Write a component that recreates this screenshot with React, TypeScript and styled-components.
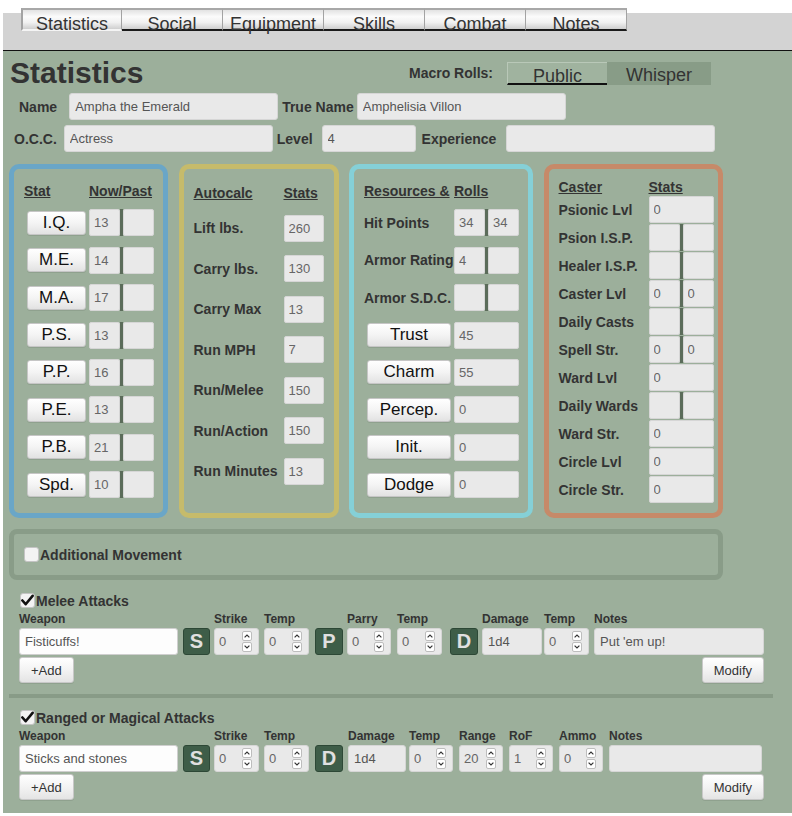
import React from "react";
import styled, { createGlobalStyle } from "styled-components";

const GlobalStyle = createGlobalStyle`
  html, body { margin: 0; padding: 0; background: #fff; }
  body { font-family: "Liberation Sans", Arial, sans-serif; color: #333; }
  * { box-sizing: border-box; }
  input { font-family: "Liberation Sans", Arial, sans-serif; }
`;

const Page = styled.div`
  margin-left: 3px;
  width: 789px;
  padding-top: 13px;
`;

const TopBar = styled.div`
  display: flex;
  align-items: flex-start;
  height: 38px;
  background: #d3d3d3;
  border-bottom: 1px solid #111;
  padding-left: 18px;
`;

const TabRow = styled.div`
  display: flex;
  margin-top: -5px;
`;

const Tab = styled.div<{ $active?: boolean }>`
  width: 101px;
  height: 23px;
  border-top: 2px solid #a8a8a8;
  border-right: 1px solid #a3a3a3;
  border-left: ${(p) => (p.$active ? "2px solid #a3a3a3" : "0")};
  border-bottom: 2px solid ${(p) => (p.$active ? "#f4f4f4" : "#1a1a1a")};
  background: linear-gradient(to bottom, #e2e2e2 0%, #fbfbfb 35%, #f1f1f1 65%, #cfcfcf 100%);
  font-size: 18px;
  line-height: 18px;
  padding-top: 5px;
  text-align: center;
  color: #333;
  overflow: visible;
`;

const Main = styled.div`
  background: #9caf9b;
  display: flex;
  flex-direction: column;
  align-items: flex-start;
  padding: 5px 0 13px 6px;
`;

const HeaderRow = styled.div`
  display: flex;
  align-items: center;
  height: 34px;
`;

const Heading = styled.h1`
  margin: 0 0 0 1px;
  width: 399px;
  font-size: 30px;
  font-weight: bold;
  color: #333;
  line-height: 34px;
`;

const MacroLabel = styled.span`
  font-size: 14px;
  font-weight: bold;
  margin-right: 14px;
`;

const Toggle = styled.div`
  display: flex;
  height: 23px;
  background: #889c87;
`;

const Seg = styled.div<{ $on?: boolean; $w: number }>`
  width: ${(p) => p.$w}px;
  height: 23px;
  font-size: 18px;
  line-height: 18px;
  padding-top: 4px;
  text-align: center;
  color: #333;
  background: ${(p) => (p.$on ? "#a0b39f" : "#889c87")};
  border-top: ${(p) => (p.$on ? "1px solid #b9c8b8" : "0")};
  border-left: ${(p) => (p.$on ? "1px solid #b9c8b8" : "0")};
  border-bottom: ${(p) => (p.$on ? "2px solid #111" : "0")};
`;

const FormRow = styled.div<{ $mt: number }>`
  display: flex;
  align-items: center;
  height: 27px;
  margin-top: ${(p) => p.$mt}px;
`;

const FormLabel = styled.span<{ $ml: number; $mr: number }>`
  font-size: 14px;
  font-weight: bold;
  white-space: nowrap;
  margin-left: ${(p) => p.$ml}px;
  margin-right: ${(p) => p.$mr}px;
`;

const TextField = styled.input<{ $w: number; $white?: boolean }>`
  width: ${(p) => p.$w}px;
  height: 27px;
  flex: none;
  background: ${(p) => (p.$white ? "#fdfdfd" : "#e9e9e9")};
  border: 1px solid ${(p) => (p.$white ? "#cfcfcf" : "#d6d6d6")};
  border-radius: 3px;
  font-size: 13px;
  color: #555;
  padding: 0 5px;
  outline: none;
`;

const BoxesRow = styled.div`
  display: flex;
  gap: 10.5px;
  height: 354px;
  margin-top: 12px;
`;

const Box = styled.div<{ $c: string; $w: number; $pt: number; $gap: number }>`
  width: ${(p) => p.$w}px;
  border: 5px solid ${(p) => p.$c};
  border-radius: 10px;
  padding: ${(p) => p.$pt}px 0 0 10px;
  display: flex;
  flex-direction: column;
  gap: ${(p) => p.$gap}px;
`;

const BoxGrid = styled.div<{ $cols: string }>`
  display: grid;
  grid-template-columns: ${(p) => p.$cols};
  align-items: center;
  min-height: 16px;
`;

const BoxHead = styled.span`
  font-size: 14px;
  font-weight: bold;
  text-decoration: underline;
  line-height: 16px;
  white-space: nowrap;
`;

const BoxRow = styled(BoxGrid)`
  height: 27px;
`;

const RowLabel = styled.span`
  font-size: 14px;
  font-weight: bold;
  white-space: nowrap;
`;

const StatButton = styled.button<{ $w: number }>`
  width: ${(p) => p.$w}px;
  height: 24px;
  margin-left: 3px;
  padding: 0;
  font-family: "Liberation Sans", Arial, sans-serif;
  font-size: 17px;
  color: #111;
  background: linear-gradient(to bottom, #ffffff 0%, #f4f4f4 50%, #e2e2e2 100%);
  border: 1px solid #c6c6c6;
  border-radius: 3px;
  box-shadow: 0 1px 0 rgba(0, 0, 0, 0.08);
`;

const Cell = styled.input<{ $w: number }>`
  width: ${(p) => p.$w}px;
  height: 27px;
  background: #e9e9e9;
  border: 1px solid #d6d6d6;
  border-radius: 2px;
  font-size: 13px;
  color: #666;
  padding: 0 4px;
  outline: none;
`;

const Split = styled.div`
  display: flex;
  height: 27px;
`;

const SplitBar = styled.div`
  width: 3px;
  height: 27px;
  background: #5b6c5a;
`;

const MoveBox = styled.div`
  width: 714px;
  height: 51px;
  margin-top: 11px;
  border: 5px solid #899c88;
  border-radius: 8px;
  display: flex;
  align-items: center;
  padding-left: 10px;
`;

const Check = styled.span`
  width: 15px;
  height: 15px;
  flex: none;
  background: #f3f3f3;
  border: 1px solid #c4c4c4;
  border-radius: 3px;
  display: flex;
  align-items: center;
  justify-content: center;
`;

const CheckLabel = styled.span`
  font-size: 14px;
  font-weight: bold;
  margin-left: 1px;
`;

const Section = styled.div<{ $mt: number }>`
  width: 755px;
  padding-left: 10px;
  margin-top: ${(p) => p.$mt}px;
`;

const SectionTitle = styled.div`
  display: flex;
  align-items: center;
  height: 17px;
  padding-left: 1px;
`;

const AttackRow = styled.div`
  display: flex;
  align-items: flex-end;
  margin-top: 3px;
`;

const Field = styled.div<{ $w: number; $ml: number }>`
  display: flex;
  flex-direction: column;
  width: ${(p) => p.$w}px;
  margin-left: ${(p) => p.$ml}px;
`;

const FieldLabel = styled.span`
  font-size: 12px;
  font-weight: bold;
  line-height: 14px;
  height: 14px;
  margin-bottom: 2px;
  white-space: nowrap;
`;

const RollButton = styled.button`
  width: 100%;
  height: 27px;
  padding: 0;
  background: #3e5d48;
  border: 1px solid #2d4836;
  border-radius: 3px;
  color: #e0e0e0;
  font-family: "Liberation Sans", Arial, sans-serif;
  font-weight: bold;
  font-size: 20px;
  line-height: 25px;
`;

const NumBox = styled.div`
  width: 100%;
  height: 27px;
  display: flex;
  align-items: center;
  background: #e9e9e9;
  border: 1px solid #d6d6d6;
  border-radius: 3px;
  padding-left: 4px;
`;

const NumText = styled.input`
  width: 20px;
  border: 0;
  background: transparent;
  font-size: 13px;
  color: #666;
  padding: 0;
  outline: none;
`;

const Spinner = styled.div`
  display: flex;
  flex-direction: column;
  gap: 1px;
  margin-left: auto;
  margin-right: 6px;
`;

const SpinBtn = styled.span`
  width: 10px;
  height: 10px;
  background: #fff;
  border: 1px solid #bdbdbd;
  border-radius: 2px;
  display: flex;
  align-items: center;
  justify-content: center;
`;

const ButtonRow = styled.div`
  display: flex;
  justify-content: space-between;
  width: 745px;
  margin-top: 2px;
`;

const SmallButton = styled.button`
  height: 26px;
  padding: 0 11px;
  font-family: "Liberation Sans", Arial, sans-serif;
  font-size: 13px;
  color: #333;
  background: linear-gradient(to bottom, #ffffff 0%, #f3f3f3 50%, #e4e4e4 100%);
  border: 1px solid #c8c8c8;
  border-radius: 3px;
  box-shadow: 0 1px 0 rgba(0, 0, 0, 0.08);
`;

const Divider = styled.div`
  width: 764px;
  height: 4px;
  margin-top: 11px;
  background: #889b87;
`;

const CheckMark = () => (
  <svg width="14" height="13" viewBox="0 0 14 13">
    <path d="M1.5 6.5 L5 10.5 L12.5 1.5" fill="none" stroke="#111" strokeWidth="2.8" strokeLinecap="round" strokeLinejoin="round" />
  </svg>
);

const Chevron = ({ up }: { up?: boolean }) => (
  <svg width="6" height="4" viewBox="0 0 6 4">
    <polyline
      points={up ? "0.6,3.4 3,1 5.4,3.4" : "0.6,0.6 3,3 5.4,0.6"}
      fill="none"
      stroke="#333"
      strokeWidth="1.2"
    />
  </svg>
);

const NumInput = ({ v }: { v: string }) => (
  <NumBox>
    <NumText defaultValue={v} />
    <Spinner>
      <SpinBtn>
        <Chevron up />
      </SpinBtn>
      <SpinBtn>
        <Chevron />
      </SpinBtn>
    </Spinner>
  </NumBox>
);

const SplitCells = ({ a, b }: { a: string; b: string }) => (
  <Split>
    <Cell $w={31} defaultValue={a} />
    <SplitBar />
    <Cell $w={31} defaultValue={b} />
  </Split>
);

type AF =
  | { k: "text"; label: string; w: number; ml: number; v: string; white?: boolean }
  | { k: "btn"; t: string; w: number; ml: number }
  | { k: "num"; label: string; w: number; ml: number; v: string };

const melee: AF[] = [
  { k: "text", label: "Weapon", w: 159, ml: 0, v: "Fisticuffs!", white: true },
  { k: "btn", t: "S", w: 27, ml: 5 },
  { k: "num", label: "Strike", w: 45, ml: 4, v: "0" },
  { k: "num", label: "Temp", w: 45, ml: 5, v: "0" },
  { k: "btn", t: "P", w: 28, ml: 6 },
  { k: "num", label: "Parry", w: 44, ml: 4, v: "0" },
  { k: "num", label: "Temp", w: 45, ml: 6, v: "0" },
  { k: "btn", t: "D", w: 28, ml: 8 },
  { k: "text", label: "Damage", w: 60, ml: 4, v: "1d4" },
  { k: "num", label: "Temp", w: 45, ml: 2, v: "0" },
  { k: "text", label: "Notes", w: 170, ml: 5, v: "Put 'em up!" },
];

const ranged: AF[] = [
  { k: "text", label: "Weapon", w: 159, ml: 0, v: "Sticks and stones", white: true },
  { k: "btn", t: "S", w: 27, ml: 5 },
  { k: "num", label: "Strike", w: 45, ml: 4, v: "0" },
  { k: "num", label: "Temp", w: 45, ml: 5, v: "0" },
  { k: "btn", t: "D", w: 28, ml: 6 },
  { k: "text", label: "Damage", w: 58, ml: 5, v: "1d4" },
  { k: "num", label: "Temp", w: 44, ml: 3, v: "0" },
  { k: "num", label: "Range", w: 44, ml: 6, v: "20" },
  { k: "num", label: "RoF", w: 44, ml: 6, v: "1" },
  { k: "num", label: "Ammo", w: 44, ml: 6, v: "0" },
  { k: "text", label: "Notes", w: 153, ml: 6, v: "" },
];

const AttackSection = ({ title, fields, mt }: { title: string; fields: AF[]; mt: number }) => (
  <Section $mt={mt}>
    <SectionTitle>
      <Check>
        <CheckMark />
      </Check>
      <CheckLabel>{title}</CheckLabel>
    </SectionTitle>
    <AttackRow>
      {fields.map((f, i) => (
        <Field key={i} $w={f.w} $ml={f.ml}>
          {f.k === "btn" ? (
            <RollButton>{f.t}</RollButton>
          ) : (
            <>
              <FieldLabel>{f.label}</FieldLabel>
              {f.k === "num" ? (
                <NumInput v={f.v} />
              ) : (
                <TextField $w={f.w} $white={f.white} defaultValue={f.v} />
              )}
            </>
          )}
        </Field>
      ))}
    </AttackRow>
    <ButtonRow>
      <SmallButton>+Add</SmallButton>
      <SmallButton>Modify</SmallButton>
    </ButtonRow>
  </Section>
);

const stats = [
  ["I.Q.", "13"],
  ["M.E.", "14"],
  ["M.A.", "17"],
  ["P.S.", "13"],
  ["P.P.", "16"],
  ["P.E.", "13"],
  ["P.B.", "21"],
  ["Spd.", "10"],
];

const autocalc = [
  ["Lift lbs.", "260"],
  ["Carry lbs.", "130"],
  ["Carry Max", "13"],
  ["Run MPH", "7"],
  ["Run/Melee", "150"],
  ["Run/Action", "150"],
  ["Run Minutes", "13"],
];

const resSplit = [
  ["Hit Points", "34", "34"],
  ["Armor Rating", "4", ""],
  ["Armor S.D.C.", "", ""],
];

const rolls = [
  ["Trust", "45"],
  ["Charm", "55"],
  ["Percep.", "0"],
  ["Init.", "0"],
  ["Dodge", "0"],
];

const caster: { l: string; v: string[] }[] = [
  { l: "Psionic Lvl", v: ["0"] },
  { l: "Psion I.S.P.", v: ["", ""] },
  { l: "Healer I.S.P.", v: ["", ""] },
  { l: "Caster Lvl", v: ["0", "0"] },
  { l: "Daily Casts", v: ["", ""] },
  { l: "Spell Str.", v: ["0", "0"] },
  { l: "Ward Lvl", v: ["0"] },
  { l: "Daily Wards", v: ["", ""] },
  { l: "Ward Str.", v: ["0"] },
  { l: "Circle Lvl", v: ["0"] },
  { l: "Circle Str.", v: ["0"] },
];

const tabs = ["Statistics", "Social", "Equipment", "Skills", "Combat", "Notes"];

export default function App() {
  return (
    <Page>
      <GlobalStyle />
      <TopBar>
        <TabRow>
          {tabs.map((t, i) => (
            <Tab key={t} $active={i === 0}>
              {t}
            </Tab>
          ))}
        </TabRow>
      </TopBar>
      <Main>
        <HeaderRow>
          <Heading>Statistics</Heading>
          <MacroLabel>Macro Rolls:</MacroLabel>
          <Toggle>
            <Seg $on $w={100}>Public</Seg>
            <Seg $w={104}>Whisper</Seg>
          </Toggle>
        </HeaderRow>
        <FormRow $mt={3}>
          <FormLabel $ml={10} $mr={12}>Name</FormLabel>
          <TextField $w={209} defaultValue="Ampha the Emerald" />
          <FormLabel $ml={4} $mr={3}>True Name</FormLabel>
          <TextField $w={209} defaultValue="Amphelisia Villon" />
        </FormRow>
        <FormRow $mt={5}>
          <FormLabel $ml={5} $mr={7}>O.C.C.</FormLabel>
          <TextField $w={209} defaultValue="Actress" />
          <FormLabel $ml={4} $mr={9}>Level</FormLabel>
          <TextField $w={94} defaultValue="4" />
          <FormLabel $ml={6} $mr={10}>Experience</FormLabel>
          <TextField $w={209} defaultValue="" />
        </FormRow>

        <BoxesRow>
          <Box $c="#6aa6c7" $w={159} $pt={14} $gap={10.4}>
            <BoxGrid $cols="65px 65px">
              <BoxHead>Stat</BoxHead>
              <BoxHead>Now/Past</BoxHead>
            </BoxGrid>
            {stats.map(([s, v]) => (
              <BoxRow key={s} $cols="65px 65px">
                <StatButton $w={59}>{s}</StatButton>
                <SplitCells a={v} b="" />
              </BoxRow>
            ))}
          </Box>

          <Box $c="#c6bb6b" $w={160} $pt={16} $gap={13.5}>
            <BoxGrid $cols="90px 40px">
              <BoxHead>Autocalc</BoxHead>
              <BoxHead>Stats</BoxHead>
            </BoxGrid>
            {autocalc.map(([l, v]) => (
              <BoxRow key={l} $cols="90px 40px">
                <RowLabel>{l}</RowLabel>
                <Cell $w={40} defaultValue={v} />
              </BoxRow>
            ))}
          </Box>

          <Box $c="#85d0d7" $w={184} $pt={14} $gap={10.4}>
            <BoxGrid $cols="90px 65px">
              <BoxHead>Resources &amp;</BoxHead>
              <BoxHead>Rolls</BoxHead>
            </BoxGrid>
            {resSplit.map(([l, a, b]) => (
              <BoxRow key={l} $cols="90px 65px">
                <RowLabel>{l}</RowLabel>
                <SplitCells a={a} b={b} />
              </BoxRow>
            ))}
            {rolls.map(([l, v]) => (
              <BoxRow key={l} $cols="90px 65px">
                <StatButton $w={84}>{l}</StatButton>
                <Cell $w={65} defaultValue={v} />
              </BoxRow>
            ))}
          </Box>

          <Box $c="#c68a69" $w={179} $pt={10} $gap={1}>
            <BoxGrid $cols="90px 65px">
              <BoxHead>Caster</BoxHead>
              <BoxHead>Stats</BoxHead>
            </BoxGrid>
            {caster.map((c) => (
              <BoxRow key={c.l} $cols="90px 65px">
                <RowLabel>{c.l}</RowLabel>
                {c.v.length === 1 ? (
                  <Cell $w={65} defaultValue={c.v[0]} />
                ) : (
                  <SplitCells a={c.v[0]} b={c.v[1]} />
                )}
              </BoxRow>
            ))}
          </Box>
        </BoxesRow>

        <MoveBox>
          <Check />
          <CheckLabel>Additional Movement</CheckLabel>
        </MoveBox>

        <AttackSection title="Melee Attacks" fields={melee} mt={12} />
        <Divider />
        <AttackSection title="Ranged or Magical Attacks" fields={ranged} mt={11} />
      </Main>
    </Page>
  );
}
